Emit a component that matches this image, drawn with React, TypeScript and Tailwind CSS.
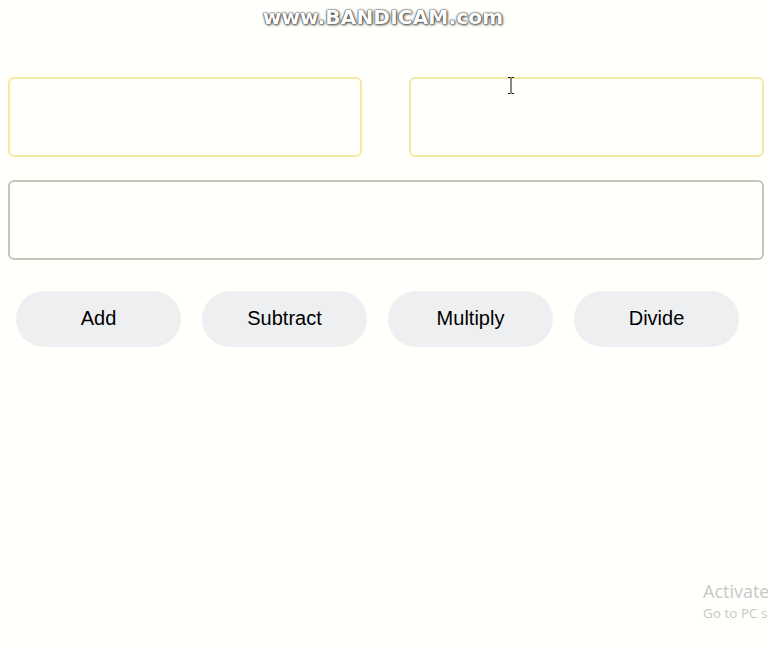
import React, { useState } from 'react'

const ops = ['Add', 'Subtract', 'Multiply', 'Divide']

const App = () => {
  const [a, setA] = useState('')
  const [b, setB] = useState('')
  const [result, setResult] = useState('')

  const calc = (op: string) => {
    const x = parseFloat(a)
    const y = parseFloat(b)
    if (isNaN(x) || isNaN(y)) return
    if (op === 'Add') setResult(String(x + y))
    if (op === 'Subtract') setResult(String(x - y))
    if (op === 'Multiply') setResult(String(x * y))
    if (op === 'Divide') setResult(String(x / y))
  }

  return (
    <div className="relative min-h-screen w-full overflow-hidden bg-[#fffffc] font-['Liberation_Sans',Arial,sans-serif]">
      {/* recorder watermark */}
      <div className="absolute left-[256px] top-[4px] w-[254px] text-center font-['DejaVu_Sans',sans-serif] text-[20px] font-bold leading-[26px] tracking-[0.2px] text-white [text-shadow:0_0_1px_#333,0_0_2px_#333,1px_1px_3px_#555]">
        www.BANDICAM.com
      </div>

      <div className="pl-[8px] pr-[4px] pt-[77px]">
        <div className="flex justify-between">
          <input
            type="text"
            value={a}
            onChange={(e) => setA(e.target.value)}
            className="h-[80px] w-[354px] rounded-[6px] border-2 border-[#f4eaa6] bg-transparent px-3 text-xl outline-none"
          />
          <input
            type="text"
            value={b}
            onChange={(e) => setB(e.target.value)}
            className="h-[80px] w-[355px] rounded-[6px] border-2 border-[#f4eaa6] bg-transparent px-3 text-xl outline-none"
          />
        </div>
        <input
          type="text"
          readOnly
          value={result}
          className="mt-[23px] block h-[80px] w-full rounded-[6px] border-2 border-[#c6c6b8] bg-transparent px-3 text-xl outline-none"
        />

        <div className="mt-[31px] flex gap-[21px] pl-[8px]">
          {ops.map((op) => (
            <button
              key={op}
              onClick={() => calc(op)}
              className="h-[56px] w-[165px] rounded-full bg-[#eeeff1] pb-[2px] text-[20px] text-black"
            >
              {op}
            </button>
          ))}
        </div>
      </div>

      {/* text cursor */}
      <svg
        className="absolute left-[507px] top-[77px]"
        width="8"
        height="17"
        viewBox="0 0 8 17"
      >
        <path
          d="M1 0.5h2.5M4.5 0.5H7M4 1v15M1 16.5h2.5M4.5 16.5H7"
          stroke="#111"
          strokeWidth="1"
          fill="none"
        />
      </svg>

      {/* activation watermark, cut by the window edge as in the capture */}
      <div className="absolute left-[703px] top-[579px] whitespace-nowrap font-['Open_Sans',sans-serif] text-[#c8c8c8]">
        <div className="text-[18px] leading-[24px]">Activate Windows</div>
        <div className="text-[13.5px] leading-[20px]">Go to PC settings to activate Windows.</div>
      </div>
    </div>
  )
}

export default App
